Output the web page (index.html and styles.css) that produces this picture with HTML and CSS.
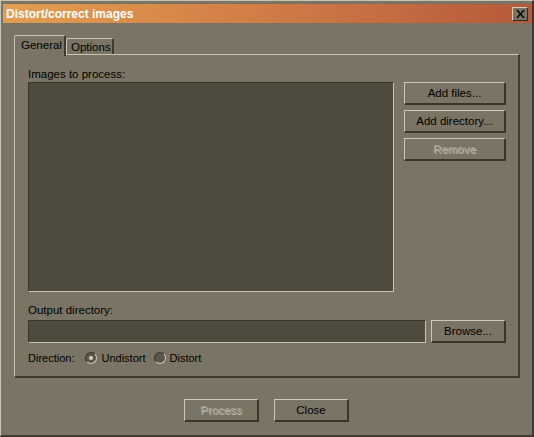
FILE: index.html
```html
<!DOCTYPE html>
<html>
<head>
<meta charset="utf-8">
<link rel="stylesheet" href="styles.css">
</head>
<body>
<div class="window">
  <div class="titlebar">
    <span class="title">Distort/correct images</span>
    <span class="closebtn"><svg width="9" height="8" viewBox="0 0 9 8"><path d="M0 0h2l2.5 3 2.5-3h2L5.5 4 9 8H7L4.5 5 2 8H0l3.5-4z" fill="#000"/></svg></span>
  </div>
  <div class="content">
    <div class="tabs">
      <div class="tab active">General</div>
      <div class="tab">Options</div>
    </div>
    <div class="panel">
      <div class="label">Images to process:</div>
      <div class="row-list">
        <div class="listbox"></div>
        <div class="side-buttons">
          <button class="btn wide">Add files...</button>
          <button class="btn wide">Add directory...</button>
          <button class="btn wide disabled">Remove</button>
        </div>
      </div>
      <div class="label out-label">Output directory:</div>
      <div class="row-field">
        <div class="field"></div>
        <button class="btn browse">Browse...</button>
      </div>
      <div class="row-dir">
        <span class="dir-label">Direction:</span>
        <span class="radio checked"></span><span class="radio-text">Undistort</span>
        <span class="radio"></span><span class="radio-text">Distort</span>
      </div>
    </div>
    <div class="footer">
      <button class="btn foot disabled">Process</button>
      <button class="btn foot">Close</button>
    </div>
  </div>
</div>
</body>
</html>
```

FILE: styles.css
```css
* { box-sizing: border-box; }
html, body { margin: 0; padding: 0; }
body {
  background: #7a7464;
  font-family: "Liberation Sans", Arial, sans-serif;
  font-size: 11px;
  color: #000;
}
.window {
  width: 534px;
  height: 437px;
  background: #7a7464;
  border-left: 1px solid #c8c3b2;
  border-top: 1px solid #c8c3b2;
  border-right: 2px solid #3e3a32;
  border-bottom: 2px solid #3e3a32;
  padding: 3px 1px 0 2px;
  display: flex;
  flex-direction: column;
}
.titlebar {
  height: 19px;
  background: linear-gradient(to right, #e29e50 0%, #d27f47 45%, #b55a3b 100%);
  display: flex;
  align-items: center;
  justify-content: space-between;
  padding: 0 3px 0 3px;
}
.title {
  color: #fff;
  font-weight: bold;
  font-size: 12px;
}
.closebtn {
  width: 16px;
  height: 14px;
  background: #7a7464;
  border-left: 1px solid #d0ccbc;
  border-top: 1px solid #d0ccbc;
  border-right: 1px solid #2e2b25;
  border-bottom: 1px solid #2e2b25;
  display: flex;
  align-items: center;
  justify-content: center;
}
.content {
  padding: 12px 11px 0 11px;
  display: flex;
  flex-direction: column;
}
.tabs {
  display: flex;
  align-items: flex-end;
  height: 19px;
  position: relative;
  z-index: 1;
}
.tab {
  height: 16px;
  padding: 0 5px 0 4px;
  border-left: 1px solid #c8c3b2;
  border-top: 1px solid #c8c3b2;
  border-right: 2px solid #3e3a32;
  border-top-left-radius: 2px;
  border-top-right-radius: 2px;
  line-height: 16px;
  font-size: 11.5px;
}
.tab.active {
  height: 21px;
  margin-bottom: -2px;
  width: 52px;
  padding-left: 6px;
  background: #7a7464;
  line-height: 18px;
}
.tab:not(.active) {
  width: 48px;
  padding-left: 4px;
  line-height: 17px;
}
.panel {
  height: 324px;
  border-left: 1px solid #c8c3b2;
  border-top: 1px solid #c8c3b2;
  border-right: 2px solid #3e3a32;
  border-bottom: 2px solid #3e3a32;
  padding: 12px 12px 0 13px;
  display: flex;
  flex-direction: column;
}
.label {
  height: 15px;
  line-height: 14px;
  font-size: 11.5px;
}
.row-list {
  display: flex;
  margin-top: 0;
}
.listbox {
  flex-shrink: 0;
  width: 366px;
  height: 210px;
  background: #4e4a3e;
  border-left: 1px solid #3a362e;
  border-top: 1px solid #3a362e;
  border-right: 1px solid #c8c3b2;
  border-bottom: 1px solid #c8c3b2;
}
.side-buttons {
  flex-shrink: 0;
  margin-left: 10px;
  display: flex;
  flex-direction: column;
  gap: 5px;
}
.btn {
  flex-shrink: 0;
  font-family: "Liberation Sans", Arial, sans-serif;
  font-size: 11.5px;
  color: #000;
  background: #7a7464;
  border-left: 1px solid #cdc8b6;
  border-top: 1px solid #cdc8b6;
  border-right: 2px solid #3a362e;
  border-bottom: 2px solid #3a362e;
  height: 23px;
  padding: 0;
  margin: 0;
  display: flex;
  align-items: center;
  justify-content: center;
}
.btn.wide { width: 102px; }
.btn.disabled {
  color: #a39f91;
  text-shadow: 1px 1px 0 #bdb9aa;
}
.out-label { margin-top: 11px; }
.row-field {
  display: flex;
  gap: 5px;
  margin-top: 2px;
}
.field {
  flex-shrink: 0;
  width: 398px;
  height: 23px;
  background: #4e4a3e;
  border-left: 1px solid #3a362e;
  border-top: 1px solid #3a362e;
  border-right: 1px solid #c8c3b2;
  border-bottom: 1px solid #c8c3b2;
}
.btn.browse { width: 75px; }
.row-dir {
  display: flex;
  align-items: center;
  margin-top: 7px;
  height: 16px;
  font-size: 11px;
}
.dir-label { margin-right: 11px; }
.radio {
  width: 12px;
  height: 12px;
  border-radius: 50%;
  border: 1px solid;
  border-color: #3a362e #cdc8b6 #cdc8b6 #3a362e;
  background: #5a5649;
  position: relative;
  margin-right: 4px;
}
.radio.checked::after {
  content: "";
  position: absolute;
  left: 3px;
  top: 3px;
  width: 4px;
  height: 4px;
  border-radius: 50%;
  background: #d8d4c4;
}
.radio-text { margin-right: 8px; }
.footer {
  display: flex;
  justify-content: center;
  gap: 15px;
  margin-top: 21px;
  padding-right: 1px;
}
.btn.foot { width: 75px; }
```
